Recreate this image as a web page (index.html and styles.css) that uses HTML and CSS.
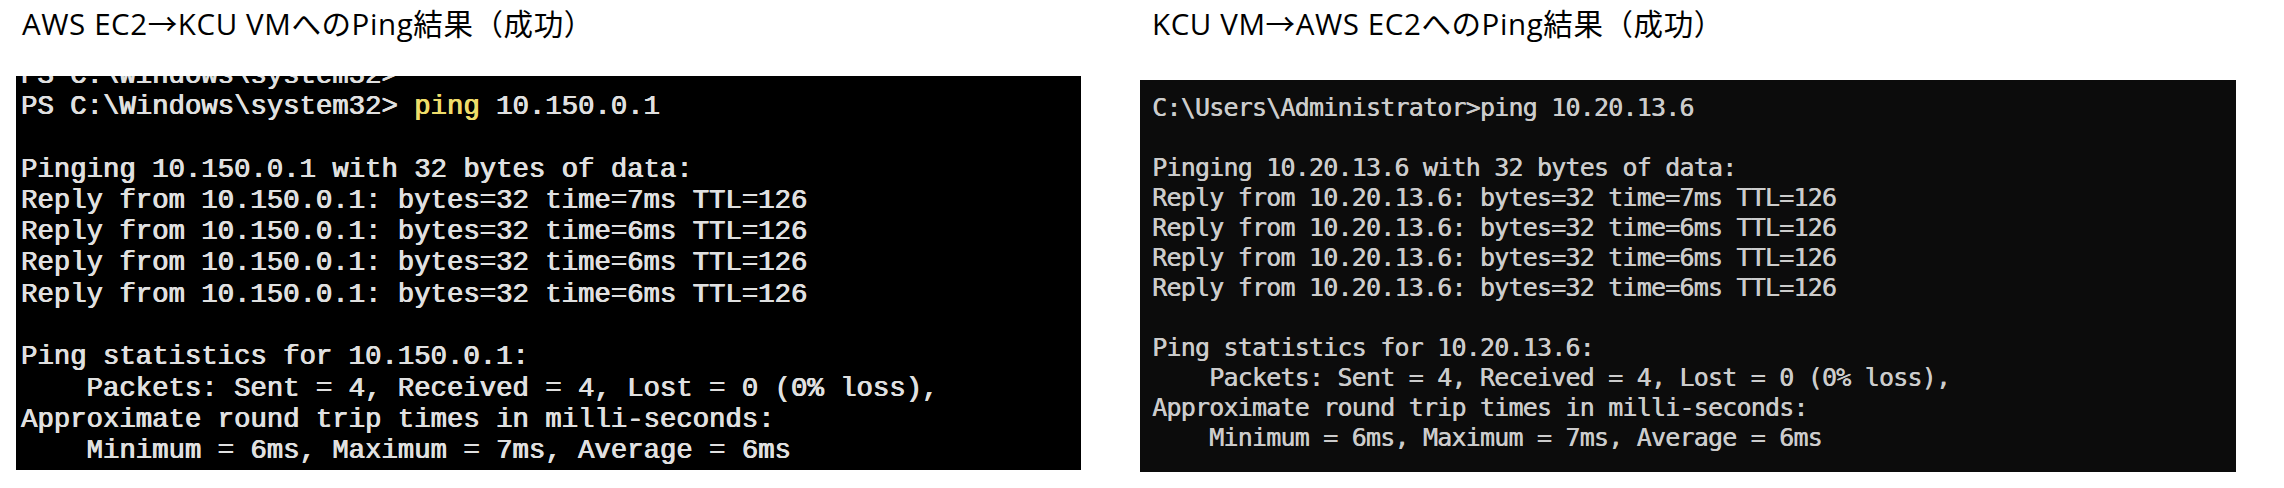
FILE: index.html
```html
<!DOCTYPE html>
<html lang="ja">
<head>
<meta charset="utf-8">
<title>Ping結果</title>
<link rel="stylesheet" href="styles.css">
</head>
<body>
<main class="page">
  <section class="panel panel-left">
    <h2 class="title">AWS EC2→KCU VMへのPing結果（成功）</h2>
    <div class="term term-ps">
      <div class="term-scrolled"><pre class="term-text">PS C:\Windows\system32&gt;</pre></div>
<pre class="term-text">PS C:\Windows\system32&gt; <span class="cmd">ping</span> 10.150.0.1

Pinging 10.150.0.1 with 32 bytes of data:
Reply from 10.150.0.1: bytes=32 time=7ms TTL=126
Reply from 10.150.0.1: bytes=32 time=6ms TTL=126
Reply from 10.150.0.1: bytes=32 time=6ms TTL=126
Reply from 10.150.0.1: bytes=32 time=6ms TTL=126

Ping statistics for 10.150.0.1:
    Packets: Sent = 4, Received = 4, Lost = 0 (0% loss),
Approximate round trip times in milli-seconds:
    Minimum = 6ms, Maximum = 7ms, Average = 6ms</pre>
    </div>
  </section>
  <section class="panel panel-right">
    <h2 class="title">KCU VM→AWS EC2へのPing結果（成功）</h2>
    <div class="term term-cmd">
<pre class="term-text">C:\Users\Administrator&gt;ping 10.20.13.6

Pinging 10.20.13.6 with 32 bytes of data:
Reply from 10.20.13.6: bytes=32 time=7ms TTL=126
Reply from 10.20.13.6: bytes=32 time=6ms TTL=126
Reply from 10.20.13.6: bytes=32 time=6ms TTL=126
Reply from 10.20.13.6: bytes=32 time=6ms TTL=126

Ping statistics for 10.20.13.6:
    Packets: Sent = 4, Received = 4, Lost = 0 (0% loss),
Approximate round trip times in milli-seconds:
    Minimum = 6ms, Maximum = 7ms, Average = 6ms</pre>
    </div>
  </section>
</main>
</body>
</html>
```
FILE: styles.css
```css
html, body {
  margin: 0;
  padding: 0;
  background: #ffffff;
}

.page {
  display: flex;
  align-items: flex-start;
  gap: 59px;
  padding: 4px 48px 0 16px;
}

.panel {
  display: flex;
  flex-direction: column;
}

.panel-left {
  width: 1065px;
}

.panel-right {
  width: 1096px;
}

.title {
  margin: 0;
  font-family: "Open Sans", "Noto Sans CJK JP", sans-serif;
  font-weight: 400;
  font-size: 29.5px;
  letter-spacing: 0.6px;
  line-height: 40px;
  color: #000000;
  white-space: nowrap;
}

.panel-left .title {
  padding-left: 6px;
  margin-bottom: 32px;
}

.panel-right .title {
  padding-left: 12px;
  margin-bottom: 36px;
}

.term {
  overflow: hidden;
}

.term-text {
  margin: 0;
  white-space: pre;
}

.term-ps {
  background: #000000;
  height: 394px;
  padding-left: 5px;
}

.term-ps .term-text {
  font-family: "Liberation Mono", "Courier New", monospace;
  font-weight: 400;
  font-size: 27.3px;
  line-height: 31.3px;
  color: #e0e0e0;
  text-shadow: 0.6px 0 0 #e0e0e0, -0.3px 0 0 #e0e0e0;
}

.term-scrolled {
  height: 15px;
  overflow: hidden;
  display: flex;
  flex-direction: column;
  justify-content: flex-end;
}

.term-ps .cmd {
  color: #eedc6a;
  text-shadow: 0.6px 0 0 #eedc6a, -0.3px 0 0 #eedc6a;
}

.term-cmd {
  background: #0c0c0c;
  height: 392px;
  padding: 13px 0 0 12px;
  box-sizing: border-box;
}

.term-cmd .term-text {
  font-family: "DejaVu Sans Mono", monospace;
  font-size: 25px;
  letter-spacing: -0.8px;
  line-height: 30px;
  color: #cccccc;
  text-shadow: 0.4px 0 0 #cccccc;
}
```
